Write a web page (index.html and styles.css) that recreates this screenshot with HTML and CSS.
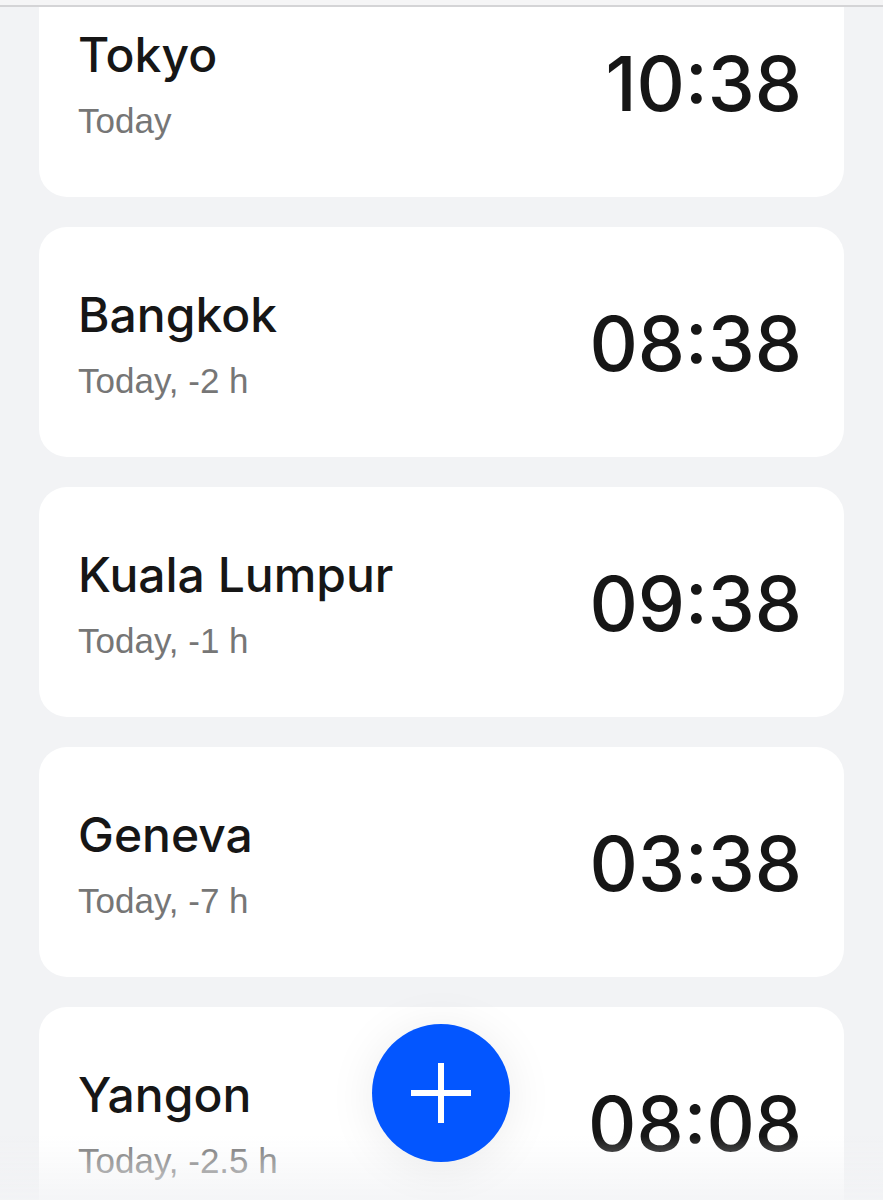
FILE: index.html
```html
<!DOCTYPE html>
<html lang="en">
<head>
<meta charset="utf-8">
<meta name="viewport" content="width=device-width, initial-scale=1">
<title>World clock</title>
<link rel="stylesheet" href="styles.css">
</head>
<body>
<header class="topbar"></header>
<main class="clocks">
<article class="card"><div class="place"><h2 class="city">Tokyo</h2><p class="offset">Today</p></div><time class="time">10:38</time></article>
<article class="card"><div class="place"><h2 class="city">Bangkok</h2><p class="offset">Today, -2 h</p></div><time class="time">08:38</time></article>
<article class="card"><div class="place"><h2 class="city">Kuala Lumpur</h2><p class="offset">Today, -1 h</p></div><time class="time">09:38</time></article>
<article class="card"><div class="place"><h2 class="city">Geneva</h2><p class="offset">Today, -7 h</p></div><time class="time">03:38</time></article>
<article class="card"><div class="place"><h2 class="city">Yangon</h2><p class="offset">Today, -2.5 h</p></div><time class="time">08:08</time></article>
</main>
<div class="fade"></div>
<button class="add" type="button" aria-label="Add city"><svg viewBox="0 0 60 60" width="60" height="60" aria-hidden="true"><path d="M30 0v60M0 30h60" stroke="currentColor" stroke-width="6"/></svg></button>
</body>
</html>
```

FILE: styles.css
```css
* { box-sizing: border-box; }
body {
  margin: 0;
  height: 100vh;
  overflow: hidden;
  display: flex;
  flex-direction: column;
  background: #f2f3f5;
  color: #161616;
  font-family: Inter, "Liberation Sans", sans-serif;
}
.topbar { flex: none; height: 7px; background: #f5f5f6; border-bottom: 2px solid #d4d4d6; }
.clocks {
  flex: 1;
  min-height: 0;
  overflow: hidden;
  display: flex;
  flex-direction: column;
  gap: 30px;
  padding: 0 39px;
}
.card {
  flex: none;
  display: flex;
  align-items: center;
  justify-content: space-between;
  height: 230px;
  padding: 3px 42px 0 39px;
  border-radius: 28px;
  background: #fff;
}
.card:first-child { margin-top: -40px; }
.city { margin: 0; font-size: 48px; line-height: 64px; font-weight: 500; }
.offset {
  margin: 0;
  padding-top: 10px;
  font-family: "Liberation Sans", Arial, sans-serif;
  font-size: 35px;
  line-height: 48px;
  color: #767676;
}
.time { font-size: 75px; line-height: 96px; font-weight: 500; }
.fade {
  position: fixed;
  inset: auto 0 0;
  height: 64px;
  background: linear-gradient(rgb(242 243 245 / 0%), rgb(242 243 245 / 80%));
  pointer-events: none;
}
.add {
  position: fixed;
  bottom: 38px;
  left: 50%;
  width: 138px;
  height: 138px;
  margin-left: -70px;
  padding: 0;
  display: grid;
  place-items: center;
  border: 0;
  border-radius: 50%;
  background: #0356ff;
  color: #fff;
  box-shadow: 0 4px 48px rgb(0 0 0 / 8%);
}
```
